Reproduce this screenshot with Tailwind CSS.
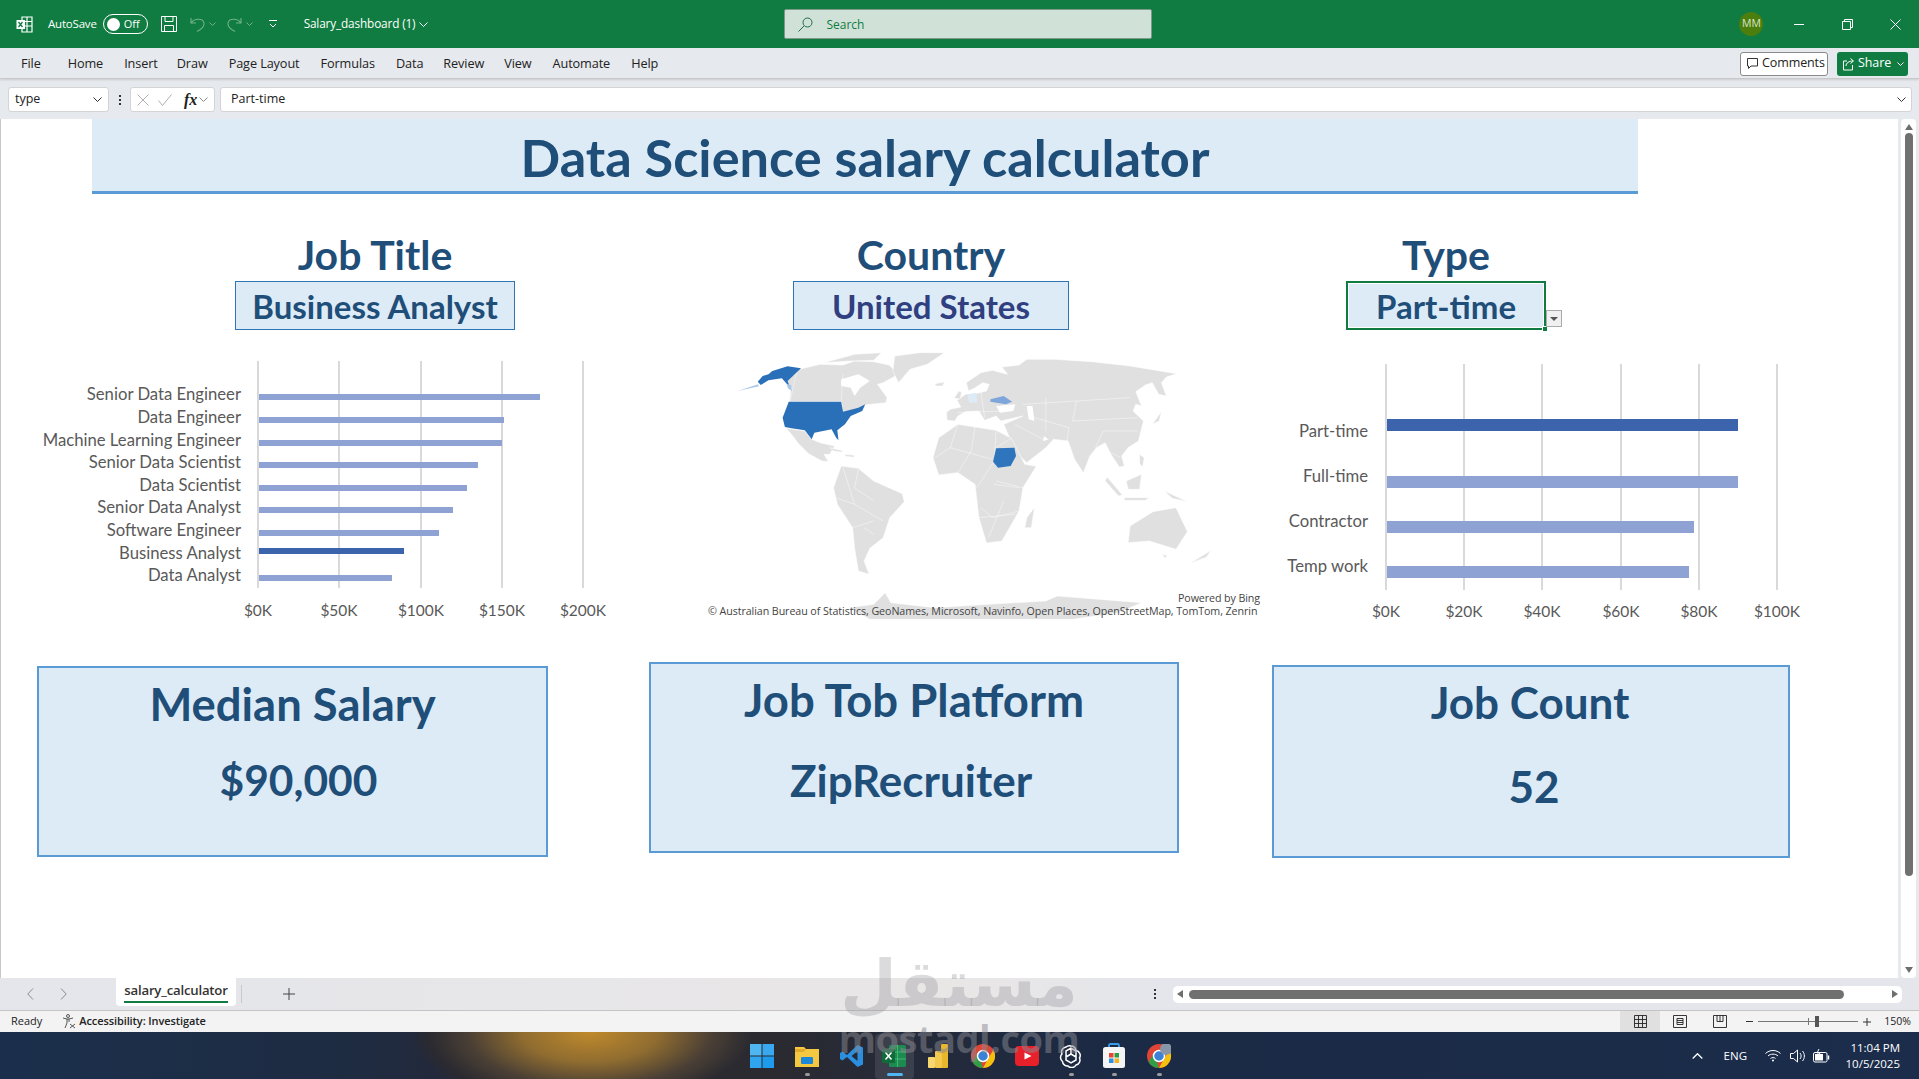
<!DOCTYPE html>
<html lang="en">
<head>
  <meta charset="UTF-8" />
  <title>Salary_dashboard (1) - Excel</title>
  <script src="https://cdn.jsdelivr.net/npm/@tailwindcss/browser@4"></script>
</head>
<body class="m-0 overflow-hidden bg-white">
<div class="relative flex h-[1079px] w-[1919px] flex-col overflow-hidden font-['Open_Sans',sans-serif] text-[#222]">

  <!-- Title bar -->
  <header class="flex h-[48px] shrink-0 items-center bg-[#107C41] text-white">
    <svg class="ml-[16px] h-[17px] w-[17px]" viewBox="0 0 17 17" fill="none" stroke="white" stroke-width="1.2"><path d="M6 1h10v15H6zM6 5.5h10M6 10h10M11 1v15"/><rect x="0.5" y="4" width="8.5" height="9" fill="white" stroke="none"/><path d="M2.5 6l4 5M6.5 6l-4 5" stroke="#107C41" stroke-width="1.3"/></svg>
    <span class="ml-[15px] text-[11.5px] tracking-[-0.2px]">AutoSave</span>
    <div class="ml-[6px] flex h-[20px] w-[45px] items-center rounded-full border border-white pl-[3px]">
      <span class="h-[13px] w-[13px] rounded-full bg-white"></span>
      <span class="ml-[4px] text-[11px]">Off</span>
    </div>
    <svg class="ml-[13px] h-[16px] w-[16px]" viewBox="0 0 16 16" fill="none" stroke="white" stroke-width="1"><path d="M.5.5h15v15H.5zM4 .5v5h8v-5M3.5 15.5V9.5h9v6"/></svg>
    <svg class="ml-[13px] h-[17px] w-[15px] opacity-40" viewBox="0 0 15 17" fill="none" stroke="white" stroke-width="1.1"><path d="M1 2v5h5M1.5 6.500C4 2.500 13 1.500 14 7c.5 4-3 6.500-7 8.500"/></svg>
    <svg class="ml-[4px] h-[4px] w-[7px] opacity-40" viewBox="0 0 7 4" fill="none" stroke="white"><path d="M.5.5l3 3 3-3"/></svg>
    <svg class="ml-[11px] h-[17px] w-[15px] opacity-40" viewBox="0 0 15 17" fill="none" stroke="white" stroke-width="1.1"><path d="M14 2v5H9M13.500 6.500C11 2.500 2 1.500 1 7c-.5 4 3 6.500 7 8.500"/></svg>
    <svg class="ml-[4px] h-[4px] w-[7px] opacity-40" viewBox="0 0 7 4" fill="none" stroke="white"><path d="M.5.500l3 3 3-3"/></svg>
    <svg class="ml-[16px] h-[8px] w-[8px]" viewBox="0 0 8 8" fill="none" stroke="white"><path d="M0 .5h8M1 4l3 3 3-3"/></svg>
    <span class="ml-[27px] text-[11.8px] tracking-[-0.15px]">Salary_dashboard (1)</span>
    <svg class="ml-[4px] h-[5px] w-[9px]" viewBox="0 0 9 5" fill="none" stroke="white"><path d="M.5.500l4 4 4-4"/></svg>

    <div class="ml-[356px] flex h-[30px] w-[368px] items-center rounded-[2px] border border-[#7f9a8b] bg-[#D0E2D8] text-[#107C41]">
      <svg class="ml-[13px] h-[15px] w-[15px]" viewBox="0 0 15 15" fill="none" stroke="#1f6b45" stroke-width="1"><circle cx="9.500" cy="5.500" r="4.500"/><path d="M6 9l-5.500 5.500"/></svg>
      <span class="ml-[13px] pt-[1px] text-[12px]">Search</span>
    </div>

    <div class="ml-[587px] flex h-[24px] w-[24px] items-center justify-center rounded-full bg-[#4C7E0E] text-[10.5px] text-[#d9e6c8]">MM</div>
    <span class="ml-[31px] h-px w-[10px] bg-white"></span>
    <svg class="ml-[38px] h-[11px] w-[11px]" viewBox="0 0 11 11" fill="none" stroke="white"><path d="M.5 2.500h8v8h-8zM2.500 2.500v-2h8v8h-2"/></svg>
    <svg class="ml-[37px] h-[11px] w-[11px]" viewBox="0 0 11 11" fill="none" stroke="white"><path d="M.5.500l10 10M10.500.500l-10 10"/></svg>
  </header>

  <!-- Menu row -->
  <nav class="relative flex h-[31px] shrink-0 items-center border-b border-[#c8c8c8] bg-[#E6E9ED] pt-[1px] text-[12.7px] tracking-[-0.1px] shadow-[0_1px_2px_rgba(0,0,0,0.12)]">
    <span class="ml-[21px]">File</span>
    <span class="ml-[27px]">Home</span>
    <span class="ml-[21px]">Insert</span>
    <span class="ml-[19px]">Draw</span>
    <span class="ml-[21px]">Page Layout</span>
    <span class="ml-[21px]">Formulas</span>
    <span class="ml-[21px]">Data</span>
    <span class="ml-[20px]">Review</span>
    <span class="ml-[20px]">View</span>
    <span class="ml-[21px]">Automate</span>
    <span class="ml-[21px]">Help</span>
    <div class="ml-auto flex h-[24px] w-[88px] items-center rounded-[3px] border border-[#8a8a8a] bg-white pl-[5px]">
      <svg class="h-[13px] w-[13px]" viewBox="0 0 13 13" fill="none" stroke="#333"><path d="M1.500 1.500h10v7.500H5l-2.500 2.500V9h-1z"/></svg>
      <span class="ml-[3px] text-[12.5px]">Comments</span>
    </div>
    <div class="ml-[9px] mr-[11px] flex h-[24px] w-[71px] items-center rounded-[3px] bg-[#107C41] pl-[5px] text-white">
      <svg class="h-[14px] w-[13px]" viewBox="0 0 13 14" fill="none" stroke="white"><path d="M5 4H1.500v9h9V8M4 9c0-3 3-5 7-5M8.500 1.500L11.500 4 8.500 6.500"/></svg>
      <span class="ml-[3px] text-[12.5px]">Share</span>
      <svg class="ml-[6px] h-[4px] w-[7px]" viewBox="0 0 7 4" fill="none" stroke="white"><path d="M.5.500l3 3 3-3"/></svg>
    </div>
  </nav>

  <!-- Formula bar -->
  <div class="flex h-[40px] shrink-0 items-center bg-[#E6E9ED] pt-[1px] text-[12.5px]">
    <div class="ml-[8px] flex h-[25px] w-[101px] items-center justify-between rounded-[3px] border border-[#d4d4d4] bg-white pl-[6px] pr-[6px]">
      <span>type</span>
      <svg class="h-[5px] w-[9px]" viewBox="0 0 9 5" fill="none" stroke="#333"><path d="M.5.500l4 4 4-4"/></svg>
    </div>
    <span class="ml-[10px] flex flex-col gap-[2px]"><i class="h-[2px] w-[2px] bg-[#333]"></i><i class="h-[2px] w-[2px] bg-[#333]"></i><i class="h-[2px] w-[2px] bg-[#333]"></i></span>
    <div class="ml-[9px] flex h-[25px] w-[85px] items-center rounded-[3px] border border-[#d4d4d4] bg-white">
      <svg class="ml-[6px] h-[12px] w-[12px]" viewBox="0 0 12 12" fill="none" stroke="#b0b0b0"><path d="M.5.500l11 11M11.500.500l-11 11"/></svg>
      <svg class="ml-[9px] h-[12px] w-[14px]" viewBox="0 0 14 12" fill="none" stroke="#b0b0b0"><path d="M.5 6.500l4 5 9-11"/></svg>
      <span class="ml-[12px] font-['Liberation_Serif',serif] text-[16px] font-bold italic leading-none">fx</span>
      <svg class="ml-[2px] h-[5px] w-[9px]" viewBox="0 0 9 5" fill="none" stroke="#888"><path d="M.5.500l4 4 4-4"/></svg>
    </div>
    <div class="ml-[5px] mr-[7px] flex h-[25px] flex-1 items-center justify-between rounded-[3px] border border-[#d4d4d4] bg-white pl-[10px] pr-[5px]">
      <span>Part-time</span>
      <svg class="h-[5px] w-[9px]" viewBox="0 0 9 5" fill="none" stroke="#333"><path d="M.5.500l4 4 4-4"/></svg>
    </div>
  </div>

  <!-- Sheet area -->
  <main class="flex h-[859px] shrink-0 bg-[#E6E9ED]">
    <div class="flex h-full w-[1898px] flex-col border-l border-[#c8c8c8] bg-white font-['Lato',sans-serif] text-[#1F4E79]">
      <div class="ml-[91px] flex h-[75px] w-[1546px] shrink-0 items-center justify-center border-b-[3px] border-[#5B9BD5] bg-[#DDEBF7] pt-[4px] text-[52.3px] font-bold">
        <span>Data Science salary calculator</span>
      </div>

      <!-- Slicer style selectors -->
      <div class="mt-[35px] flex shrink-0 items-start text-center font-bold">
        <div class="ml-[234px] w-[280px]">
          <div class="h-[52px] text-[41px] leading-[51px]">Job Title</div>
          <div class="h-[49px] border border-[#2E75B6] bg-[#DDEBF7] text-[33px] leading-[48px]">Business Analyst</div>
        </div>
        <div class="ml-[278px] w-[276px]">
          <div class="h-[52px] text-[41px] leading-[51px]">Country</div>
          <div class="h-[49px] border border-[#2E75B6] bg-[#DDEBF7] text-[33px] leading-[48px] text-[#2F3F7F]">United States</div>
        </div>
        <div class="ml-[277px] w-[200px]">
          <div class="h-[52px] text-[41px] leading-[51px]">Type</div>
          <div class="relative h-[49px] border-2 border-[#107C41] bg-[#DDEBF7] text-[33px] leading-[46px] shadow-[inset_0_0_0_1px_white]">
            Part-time
            <span class="absolute bottom-[-4px] right-[-4px] h-[6px] w-[6px] border border-white bg-[#107C41]"></span>
            <span class="absolute bottom-[1px] left-[198px] flex h-[17px] w-[16px] items-center justify-center border border-[#ababab] bg-[#f0f0f0]">
              <span class="h-0 w-0 border-x-[4px] border-t-[4px] border-x-transparent border-t-[#555]"></span>
            </span>
          </div>
        </div>
      </div>

      <!-- Charts -->
      <div class="mt-[11px] flex h-[290px] shrink-0 items-start font-['Open_Sans',sans-serif]">
        <svg class="ml-[19px] shrink-0" width="620" height="290" viewBox="20 340 620 290" font-family="Lato" font-size="15.5" fill="#595959">
          <g stroke="#D9D9D9" stroke-width="2"><path d="M258 360V587M339 360V587M421 360V587M502 360V587M583 360V587"/></g>
          <g fill="#8FA2D4">
            <rect x="259" y="393" width="281" height="6"/><rect x="259" y="416" width="245" height="6"/><rect x="259" y="439" width="243" height="6"/>
            <rect x="259" y="461" width="219" height="6"/><rect x="259" y="484" width="208" height="6"/><rect x="259" y="506" width="194" height="6"/>
            <rect x="259" y="529" width="180" height="6"/><rect x="259" y="574" width="133" height="6"/>
          </g>
          <rect x="259" y="547" width="145" height="6" fill="#3B64AD"/>
          <g text-anchor="end" font-size="16.7">
            <text x="241" y="399">Senior Data Engineer</text><text x="241" y="422">Data Engineer</text><text x="241" y="445">Machine Learning Engineer</text>
            <text x="241" y="467">Senior Data Scientist</text><text x="241" y="490">Data Scientist</text><text x="241" y="512">Senior Data Analyst</text>
            <text x="241" y="535">Software Engineer</text><text x="241" y="558">Business Analyst</text><text x="241" y="580">Data Analyst</text>
          </g>
          <g text-anchor="middle">
            <text x="258" y="615">$0K</text><text x="339" y="615">$50K</text><text x="421" y="615">$100K</text><text x="502" y="615">$150K</text><text x="583" y="615">$200K</text>
          </g>
        </svg>

        <!-- Map -->
        <div class="relative ml-[50px] h-[290px] w-[600px] shrink-0">
          <svg class="block" width="600" height="290" viewBox="0 0 1568 870" preserveAspectRatio="none">
            <g fill="#E0E0E0" stroke="#fff" stroke-width="1.500" stroke-linejoin="round">
              <!-- antarctica -->
              <path d="M415 800L480 790 510 755 525 785 640 800 780 790 930 780 960 765 1180 785 1120 815 1000 835H470z"/>
              <!-- canada, arctic islands, greenland -->
              <path d="M285 85L340 70 400 72 430 60 480 62 520 72 545 100 505 125 490 130 515 170 512 185 455 192 440 205 400 215 395 182H260L264 140 250 122z"/>
              <path d="M350 65L430 40 500 35 480 58 420 60z"/>
              <path d="M535 45L600 35 665 35 620 70 575 85 545 125 530 90z"/>
              <!-- mexico + central america -->
              <path d="M250 262L300 270 318 295 340 305 378 315 365 340 350 340 362 362 345 360 310 338 285 310 262 275z"/>
              <path d="M365 320l30 8 5 6-25-4zM405 340l25 3-2 6-22-3z"/>
              <!-- south america -->
              <path d="M395 375L440 382 480 420 555 458 560 482 522 530 505 590 470 622 455 660 468 700 440 690 430 620 425 560 385 490 375 440z"/>
              <!-- eurasia -->
              <path d="M672 238L670 215 680 205 708 198 698 178 720 160 745 158 775 150 782 130 765 125 745 140 728 150 722 125 760 95 790 88 830 100 815 78 860 72 880 55 950 55 1050 62 1150 75 1272 98 1245 108 1232 125 1245 165 1225 160 1208 125 1190 132 1165 152 1180 195 1165 190 1158 210 1185 240 1172 300 1145 320 1128 345 1135 375 1122 378 1100 340 1085 305 1062 320 1045 345 1028 395 1005 355 988 300 950 295 930 320 880 365 862 345 838 298 820 250 870 225 812 240 800 225 770 238 755 210 720 212 700 225 692 240z"/>
              <path d="M690 172l12-22 8 4-4 20zM640 128l25-5-5 12-18 0z"/>
              <!-- africa -->
              <path d="M650 290L700 250 745 258 800 268 840 292 875 370 905 376 870 440 860 510 815 600 775 606 755 530 745 430 700 395 650 402 635 350z"/>
              <path d="M880 530L900 500 892 560 875 560z"/>
              <!-- asia pacific islands -->
              <path d="M1208 250L1232 212 1226 240zM1090 408L1130 462 1120 465 1085 420zM1140 420L1180 400 1175 445 1145 445zM1135 470H1200L1190 478H1135zM1240 450L1300 482 1260 472zM1175 340l12 10-4 28-8-10z"/>
              <!-- australia, nz -->
              <path d="M1150 555L1210 512 1270 500 1300 572 1270 625 1200 600 1145 605z"/>
              <path d="M1235 640l12 4-6 8zM1305 668L1362 628 1350 648z"/>
            </g>
            <!-- inland seas -->
            <path fill="#fff" d="M800 195L850 190 845 210 810 215zM880 195L895 195 900 240 885 235zM925 285l12 10-14 5zM395 115L440 100 470 120 445 140 430 165 420 140 395 135z"/>
            <!-- country borders -->
            <g fill="none" stroke="#fff" stroke-width="1.200">
              <path d="M700 250L680 320 640 350M745 258L735 330 700 395M800 268L795 360 750 440M680 320L790 355M840 292L800 320M860 510L790 530 760 500M755 530L850 520M795 430L860 440M870 440L800 420M820 480L780 590"/>
              <path d="M870 190L1010 180 1150 170M1010 180L1000 240 1170 230M900 230L990 260 985 300M930 170L930 270M1060 320L1080 270 1170 270M1090 330L1125 350M760 150L770 230M700 215L820 210M850 250L930 300"/>
              <path d="M400 380L430 490 505 540M430 490L380 470M440 385L430 440 480 480M455 560L480 580M425 560L480 540"/>
              <path d="M280 85L262 180M400 100L395 182"/>
            </g>
            <!-- highlighted countries -->
            <path fill="#2A70B8" d="M258 182H395L400 212 440 200 458 190 450 210 420 225 405 250 385 268 388 298 382 290 370 265 325 275 318 295 300 268 265 262 248 258 242 230z"/>
            <path fill="#2A70B8" d="M177 122L190 105 205 100 215 90 255 76 290 82 255 120 262 140 240 112 205 118 185 132z"/>
            <path fill="#A9C7EC" d="M178 130L125 150 180 136zM252 128l12 4 2 18-10-8z"/>
            <path fill="#DDEBF7" d="M725 160L748 155 750 185 730 185z"/>
            <path fill="#7EA6DB" d="M785 175L820 165 842 182 825 190 785 182z"/>
            <path fill="#2F75BD" d="M800 322L848 320 852 345 838 375 805 380 792 362z"/>
          </svg>
          <div class="absolute right-[30px] top-[250px] text-[10.7px] leading-[14px] tracking-[-0.1px] text-[#444]">Powered by Bing</div>
          <div class="absolute left-[18px] top-[263px] whitespace-nowrap text-[10.7px] leading-[14px] tracking-[-0.08px] text-[#444]">© Australian Bureau of Statistics, GeoNames, Microsoft, Navinfo, Open Places, OpenStreetMap, TomTom, Zenrin</div>
        </div>

        <svg class="ml-[-30px] shrink-0" width="560" height="400" viewBox="1260 340 560 400" font-family="Lato" font-size="15.5" fill="#595959">
          <g stroke="#D9D9D9" stroke-width="2"><path d="M1386 363V589M1464 363V589M1542 363V589M1621 363V589M1699 363V589M1777 363V589"/></g>
          <rect x="1387" y="418" width="351" height="12" fill="#3B64AD"/>
          <g fill="#8FA2D4"><rect x="1387" y="475" width="351" height="12"/><rect x="1387" y="520" width="307" height="12"/><rect x="1387" y="565" width="302" height="12"/></g>
          <g text-anchor="end" font-size="16.7"><text x="1368" y="436">Part-time</text><text x="1368" y="481">Full-time</text><text x="1368" y="526">Contractor</text><text x="1368" y="571">Temp work</text></g>
          <g text-anchor="middle"><text x="1386" y="616">$0K</text><text x="1464" y="616">$20K</text><text x="1542" y="616">$40K</text><text x="1621" y="616">$60K</text><text x="1699" y="616">$80K</text><text x="1777" y="616">$100K</text></g>
        </svg>
      </div>

      <!-- Summary cards -->
      <div class="mt-[31px] flex shrink-0 items-start text-center font-bold">
        <div class="ml-[36px] mt-[4px] h-[191px] w-[511px] border-2 border-[#5B9BD5] bg-[#DDEBF7]">
          <div class="pt-[8px] text-[45.4px] leading-[56px]">Median Salary</div>
          <div class="pl-[12px] pt-[20px] text-[42.5px] leading-[56px]">$90,000</div>
        </div>
        <div class="ml-[101px] h-[191px] w-[530px] border-2 border-[#5B9BD5] bg-[#DDEBF7]">
          <div class="pt-[8px] text-[45.5px] leading-[56px]">Job Tob Platform</div>
          <div class="pr-[6px] pt-[24px] text-[44px] leading-[56px]">ZipRecruiter</div>
        </div>
        <div class="ml-[93px] mt-[3px] h-[193px] w-[518px] border-2 border-[#5B9BD5] bg-[#DDEBF7]">
          <div class="pr-[2px] pt-[7px] text-[44px] leading-[56px]">Job Count</div>
          <div class="pl-[6px] pt-[28px] text-[44px] leading-[56px]">52</div>
        </div>
      </div>
    </div>

    <!-- Vertical scrollbar -->
    <div class="ml-[3px] flex h-full w-[15px] flex-col items-center rounded-[4px] bg-white py-[5px]">
      <span class="h-0 w-0 border-x-[4px] border-b-[6px] border-x-transparent border-b-[#6e6e6e]"></span>
      <span class="mt-[3px] h-[743px] w-[8px] rounded-full bg-[#707070]"></span>
      <span class="mt-auto h-0 w-0 border-x-[4px] border-t-[6px] border-x-transparent border-t-[#6e6e6e]"></span>
    </div>
  </main>

  <!-- Sheet tabs -->
  <div class="flex h-[33px] shrink-0 items-center border-b border-[#c4c4c4] bg-[linear-gradient(90deg,#E4E6EB,#E9E6E6_50%,#E4E6EB_60%)]">
    <svg class="ml-[27px] h-[12px] w-[7px]" viewBox="0 0 7 12" fill="none" stroke="#8a8a8a"><path d="M6 .5L.8 6 6 11.500"/></svg>
    <svg class="ml-[26px] h-[12px] w-[7px]" viewBox="0 0 7 12" fill="none" stroke="#8a8a8a"><path d="M1 .5L6.200 6 1 11.500"/></svg>
    <div class="ml-[49px] flex h-[28px] w-[120px] flex-col items-center self-start rounded-b-[4px] bg-white">
      <span class="mt-[2px] text-[13.2px] font-semibold leading-[21px] tracking-[-0.2px] text-[#333]">salary_calculator</span>
      <span class="h-[2px] w-[104px] bg-[#107C41]"></span>
    </div>
    <span class="ml-[5px] h-[18px] w-px bg-[#c9c9c9]"></span>
    <svg class="ml-[41px] h-[12px] w-[12px]" viewBox="0 0 12 12" stroke="#444"><path d="M6 0v12M0 6h12"/></svg>
    <span class="ml-[859px] flex flex-col gap-[2px]"><i class="h-[2px] w-[2px] bg-[#333]"></i><i class="h-[2px] w-[2px] bg-[#333]"></i><i class="h-[2px] w-[2px] bg-[#333]"></i></span>
    <div class="ml-[17px] flex h-[17px] w-[729px] items-center rounded-[5px] bg-white">
      <span class="ml-[4px] h-0 w-0 border-y-[4px] border-r-[6px] border-y-transparent border-r-[#6e6e6e]"></span>
      <span class="ml-[6px] h-[9px] w-[655px] rounded-full bg-[#707070]"></span>
      <span class="ml-auto mr-[4px] h-0 w-0 border-y-[4px] border-l-[6px] border-y-transparent border-l-[#6e6e6e]"></span>
    </div>
  </div>

  <!-- Status bar -->
  <footer class="flex h-[21px] shrink-0 items-center bg-[#F3F3F3] text-[11px]">
    <span class="ml-[11px]">Ready</span>
    <svg class="ml-[20px] h-[15px] w-[14px]" viewBox="0 0 14 15" fill="none" stroke="#444" stroke-width="0.900"><circle cx="6" cy="2" r="1.500"/><path d="M1 4l4 1h2l4-1M5 5v4l-2 5M7 5v3M8 10l5 4M13 10l-5 4"/></svg>
    <span class="ml-[3px] font-semibold tracking-[-0.1px]">Accessibility: Investigate</span>
    <div class="ml-auto flex h-full items-center">
      <span class="flex h-full w-[40px] items-center justify-center bg-[#E0E0E0]">
        <svg class="h-[13px] w-[13px]" viewBox="0 0 13 13" fill="none" stroke="#222" stroke-width="0.900"><path d="M.5.500h12v12H.5zM.5 4.500h12M.5 8.500h12M4.500.5v12M8.500.5v12"/></svg>
      </span>
      <svg class="ml-[13px] h-[13px] w-[14px]" viewBox="0 0 14 13" fill="none" stroke="#222" stroke-width="0.900"><path d="M.5.500h13v12H.5zM4 3.500h6v6H4zM4 5.500h6M4 7.500h6"/></svg>
      <svg class="ml-[26px] h-[13px] w-[14px]" viewBox="0 0 14 13" fill="none" stroke="#222" stroke-width="0.900"><path d="M.5.500h13v12H.5zM4 .5v6h6v-6M7 .5v6"/></svg>
      <span class="ml-[19px] h-px w-[7px] bg-[#333]"></span>
      <div class="relative ml-[5px] h-px w-[100px] bg-[#777]">
        <span class="absolute left-[50px] top-[-3px] h-[7px] w-px bg-[#777]"></span>
        <span class="absolute left-[57px] top-[-5px] h-[11px] w-[4px] bg-[#555]"></span>
      </div>
      <svg class="ml-[5px] h-[8px] w-[8px]" viewBox="0 0 8 8" stroke="#333"><path d="M4 0v8M0 4h8"/></svg>
      <span class="ml-[13px] mr-[8px] text-[10.500px]">150%</span>
    </div>
  </footer>

  <!-- Windows taskbar -->
  <div class="relative flex h-[47px] shrink-0 items-center bg-[radial-gradient(ellipse_180px_80px_at_590px_0px,#C08A2C_0%,#8f6c30_38%,#4a3f35_68%,#2a2a30_90%,transparent_100%),linear-gradient(90deg,#1B2F4C_0%,#1E2C42_18%,#24283a_24%,#2a2a30_38%,#2b2a30_40%,#1B2A45_58%,#1B2D4B_100%)] text-white">
    <svg class="absolute left-[750px] top-[12px] h-[24px] w-[24px]" viewBox="0 0 24 24"><rect width="11.500" height="11.500" fill="#4FB6F2"/><rect x="12.500" width="11.500" height="11.500" fill="#3AA8EE"/><rect y="12.500" width="11.500" height="11.500" fill="#2FA5F0"/><rect x="12.500" y="12.500" width="11.500" height="11.500" fill="#1E9BEC"/></svg>
    <svg class="absolute left-[795px] top-[13px] h-[22px] w-[24px]" viewBox="0 0 24 22"><path d="M0 2h9l2 2h13v18H0z" fill="#F5C842"/><path d="M0 4h11l-2 3H0z" fill="#E3A92A"/><rect x="6" y="12" width="12" height="7" rx="1" fill="#1E88D8"/></svg>
    <svg class="absolute left-[840px] top-[12px] h-[24px] w-[24px]" viewBox="0 0 24 24"><path d="M17.500 1L23 3.500v17L17.500 23 7 13l-4.500 3.500L0 15V9l2.500-1.500L7 11zM17.500 7l-6 5 6 5z" fill="#2B8FE0"/></svg>
    <div class="absolute left-[875px] top-[2px] h-[45px] w-[39px] rounded-[4px] bg-white/10"></div>
    <svg class="absolute left-[882px] top-[12px] h-[24px] w-[24px]" viewBox="0 0 24 24"><rect x="7" y="1" width="17" height="22" rx="1.500" fill="#1D8A50"/><path d="M7 8h17M7 15h17M15.500 1v22" stroke="#3FB774" stroke-width="1"/><rect y="5" width="13" height="14" rx="1" fill="#0F6B3A"/><path d="M3.500 8.500l6 7M9.500 8.500l-6 7" stroke="#fff" stroke-width="1.500"/></svg>
    <span class="absolute left-[887px] top-[41px] h-[3px] w-[16px] rounded-full bg-[#4FB6F2]"></span>
    <svg class="absolute left-[928px] top-[12px] h-[24px] w-[20px]" viewBox="0 0 20 24"><rect x="13" y="0" width="7" height="24" rx="1" fill="#E8B72E"/><rect x="7" y="7" width="7" height="17" rx="1" fill="#F2C94C"/><rect x="0" y="13" width="7" height="11" rx="1" fill="#F7D870"/></svg>
    <svg class="absolute left-[971px] top-[12px] h-[24px] w-[24px]" viewBox="0 0 24 24"><circle cx="12" cy="12" r="12" fill="#E04437"/><path d="M12 24A12 12 0 0 1 1.600 18L7 9l5 15z" fill="#2F9E44"/><path d="M12 24L17.500 14 22.400 6A12 12 0 0 1 12 24z" fill="#F4C20D"/><circle cx="12" cy="12" r="5.500" fill="#3B82D6" stroke="#fff" stroke-width="1.500"/></svg>
    <svg class="absolute left-[1015px] top-[14px] h-[20px] w-[24px]" viewBox="0 0 24 20"><rect width="24" height="20" rx="4" fill="#E8202A"/><path d="M9.500 6.500l7 3.500-7 3.500z" fill="#fff"/></svg>
    <svg class="absolute left-[1059px] top-[12px] h-[24px] w-[24px]" viewBox="0 0 24 24" fill="none" stroke="#fff" stroke-width="1.500"><path d="M12 2a5 5 0 0 1 5 4.500 5 5 0 0 1 3.500 7.500A5 5 0 0 1 17 21a5 5 0 0 1-8 1 5 5 0 0 1-5.500-4.500A5 5 0 0 1 3 10a5 5 0 0 1 4-7 5 5 0 0 1 5-1z"/><path d="M7 7v9l5 3 5-3V7l-5-3zM12 10l5 3M12 10l-5 3M12 10V4"/></svg>
    <svg class="absolute left-[1103px] top-[11px] h-[25px] w-[22px]" viewBox="0 0 22 25"><path d="M6 5V2.500Q6 1 7.500 1h7Q16 1 16 2.500V5" fill="none" stroke="#3A9BE8" stroke-width="1.800"/><rect y="4" width="22" height="21" rx="2.500" fill="#F4F4F4"/><rect x="6" y="10" width="4.500" height="4.500" fill="#E8452C"/><rect x="11.500" y="10" width="4.500" height="4.500" fill="#2E9E44"/><rect x="6" y="15.500" width="4.500" height="4.500" fill="#2F8FE6"/><rect x="11.500" y="15.500" width="4.500" height="4.500" fill="#F2B420"/></svg>
    <svg class="absolute left-[1147px] top-[12px] h-[24px] w-[24px]" viewBox="0 0 24 24"><circle cx="12" cy="12" r="12" fill="#E04437"/><path d="M12 24A12 12 0 0 1 1.600 18L7 9l5 15z" fill="#2F9E44"/><path d="M12 24L17.500 14 22.400 6A12 12 0 0 1 12 24z" fill="#F4C20D"/><circle cx="12" cy="12" r="5.500" fill="#3B82D6" stroke="#fff" stroke-width="1.500"/><circle cx="19" cy="5" r="6" fill="#8996A8"/></svg>
    <span class="absolute left-[805px] top-[41px] h-[3px] w-[5px] rounded-full bg-[#9a9a9a]"></span>
    <span class="absolute left-[1069px] top-[41px] h-[3px] w-[5px] rounded-full bg-[#9a9a9a]"></span>
    <span class="absolute left-[1112px] top-[41px] h-[3px] w-[5px] rounded-full bg-[#9a9a9a]"></span>
    <span class="absolute left-[1157px] top-[41px] h-[3px] w-[5px] rounded-full bg-[#9a9a9a]"></span>

    <div class="ml-auto flex items-center">
      <svg class="h-[6px] w-[11px]" viewBox="0 0 11 6" fill="none" stroke="#fff" stroke-width="1.300"><path d="M.7 5.500l4.800-4.800 4.800 4.800"/></svg>
      <span class="ml-[21px] text-[11.5px]">ENG</span>
      <svg class="ml-[18px] h-[13px] w-[16px]" viewBox="0 0 16 13" fill="none" stroke="#fff"><path d="M.5 4.500c4-4 11-4 15 0M3 7c2.500-2.500 7.500-2.500 10 0M5.500 9.500c1.200-1.200 3.800-1.200 5 0"/><circle cx="8" cy="11.500" r="1" fill="#fff" stroke="none"/></svg>
      <svg class="ml-[9px] h-[14px] w-[16px]" viewBox="0 0 16 14" fill="none" stroke="#fff"><path d="M.5 4.500h3l4-3.500v12l-4-3.500h-3zM10 4c1.500 2 1.500 4 0 6M12.500 2c2.500 3 2.500 7 0 10"/></svg>
      <svg class="ml-[7px] h-[14px] w-[17px]" viewBox="0 0 17 14" fill="none" stroke="#fff"><rect x=".5" y="3.500" width="13.500" height="9.500" rx="1.500"/><path d="M15.500 6.500v4" stroke-width="1.500"/><rect x="2" y="5" width="8" height="6.500" fill="#fff" stroke="none"/><path d="M6 0L4 4h3L5 7" stroke-width="1"/></svg>
      <div class="ml-[14px] mr-[19px] flex w-[56px] flex-col items-end text-[11.500px] leading-[16px]">
        <span>11:04 PM</span>
        <span>10/5/2025</span>
      </div>
    </div>
  </div>

  <!-- Watermark -->
  <div class="pointer-events-none absolute left-[845px] top-[946px] flex w-[228px] flex-col items-center font-bold text-[#888890]/30">
    <span class="h-[76px] font-['DejaVu_Sans',sans-serif] text-[65px] leading-[76px]">مستقل</span>
    <span class="font-['Open_Sans',sans-serif] text-[38px] leading-[32px] tracking-[-0.5px] text-[#888890]/50">mostaql.com</span>
  </div>
</div>
</body>
</html>
